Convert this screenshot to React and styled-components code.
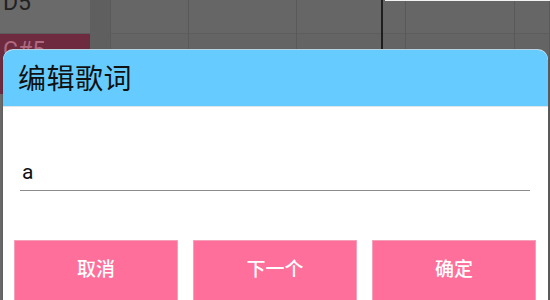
import React from "react";
import styled, { createGlobalStyle } from "styled-components";

const Global = createGlobalStyle`
  html, body { margin: 0; padding: 0; background: #666666; }
  body { font-family: "Noto Sans CJK SC", "Noto Sans", sans-serif; }
`;

const Page = styled.div`
  position: relative;
  width: 550px;
  height: 300px;
  overflow: hidden;
  background: #666666;
  display: flex;
`;

const KeyColumn = styled.div`
  width: 90px;
  display: flex;
  flex-direction: column;
  background: #696969;
`;

const KeyRow = styled.div`
  height: ${(p) => p.$h}px;
  background: ${(p) => p.$bg};
  color: ${(p) => p.$fg};
  font-family: "Roboto", "Noto Sans", sans-serif;
  font-size: 23px;
  line-height: 1;
  padding-left: 3px;
  overflow: hidden;
  box-sizing: border-box;
  border-bottom: ${(p) => (p.$line ? "1px solid #5c5c5c" : "none")};
`;

const KeyLabel = styled.span`
  display: block;
  margin-top: ${(p) => p.$mt}px;
`;

const Strip = styled.div`
  width: 20px;
  background: #5f5f5f;
  border-right: 1px solid #5a5a5a;
`;

const Grid = styled.div`
  flex: 1;
  display: flex;
  position: relative;
`;

const Cell = styled.div`
  width: ${(p) => p.$w}px;
  flex: ${(p) => (p.$grow ? 1 : "none")};
  border-right: ${(p) => p.$bw || 1}px solid ${(p) => p.$line || "#595959"};
  background: linear-gradient(
    to bottom,
    #666666 0px,
    #666666 33px,
    #5d5d5d 33px,
    #5d5d5d 34px,
    #646464 34px
  );
`;

const TopGlint = styled.div`
  position: absolute;
  top: 0;
  left: 274px;
  right: 0;
  height: 1px;
  background: #f2f2f2;
`;

const Dialog = styled.div`
  position: absolute;
  left: 3px;
  right: 2px;
  top: 50px;
  bottom: -12px;
  background: #ffffff;
  border-radius: 10px 10px 0 0;
  overflow: hidden;
  box-shadow: 0 -1px 0 #b8d4e2, 0 0 2px rgba(0, 0, 0, 0.35);
  display: flex;
  flex-direction: column;
`;

const Header = styled.div`
  height: 57px;
  background: #66ccff;
  display: flex;
  align-items: center;
  padding-left: 15px;
  padding-bottom: 2px;
  box-sizing: border-box;
  border-bottom: 1px solid #dde6ea;
`;

const Title = styled.h1`
  margin: 0;
  font-family: "Noto Sans CJK SC", sans-serif;
  font-weight: 400;
  font-size: 28px;
  color: #111111;
  letter-spacing: 0.5px;
`;

const Body = styled.div`
  display: flex;
  flex-direction: column;
  padding: 49px 0 0 0;
`;

const Field = styled.input`
  margin: 0 18px 0 17px;
  height: 35px;
  padding: 0 0 2px 2px;
  border: none;
  border-bottom: 1.5px solid #8c8c8c;
  outline: none;
  background: transparent;
  font-family: "Roboto", "Noto Sans", sans-serif;
  font-size: 21px;
  color: #111111;
  box-sizing: border-box;
`;

const Buttons = styled.div`
  display: flex;
  gap: 15px;
  padding: 49px 0 0 11px;
`;

const Button = styled.button`
  width: 164px;
  height: 62px;
  padding: 0 0 7px 0;
  background: #ff6f9c;
  border: 1px solid #f4a0bb;
  color: #ffffff;
  font-family: "Noto Sans CJK SC", sans-serif;
  font-weight: 500;
  font-size: 19px;
  box-sizing: border-box;
`;

export default function App() {
  return (
    <>
      <Global />
      <Page>
        <KeyColumn>
          <KeyRow $h={34} $bg="#6a6a6a" $fg="#222222" $line>
            <KeyLabel $mt={-9}>D5</KeyLabel>
          </KeyRow>
          <KeyRow $h={60} $bg="#6e2b40" $fg="#b06a80">
            <KeyLabel $mt={5}>C#5</KeyLabel>
          </KeyRow>
        </KeyColumn>
        <Strip />
        <Grid>
          <Cell $w={77} />
          <Cell $w={107} />
          <Cell $w={84} $bw={2} $line="#1e1e1e" />
          <Cell $w={22} />
          <Cell $w={108} />
          <Cell $grow />
          <TopGlint />
        </Grid>
        <Dialog>
          <Header>
            <Title>编辑歌词</Title>
          </Header>
          <Body>
            <Field value="a" readOnly />
            <Buttons>
              <Button>取消</Button>
              <Button>下一个</Button>
              <Button>确定</Button>
            </Buttons>
          </Body>
        </Dialog>
      </Page>
    </>
  );
}
